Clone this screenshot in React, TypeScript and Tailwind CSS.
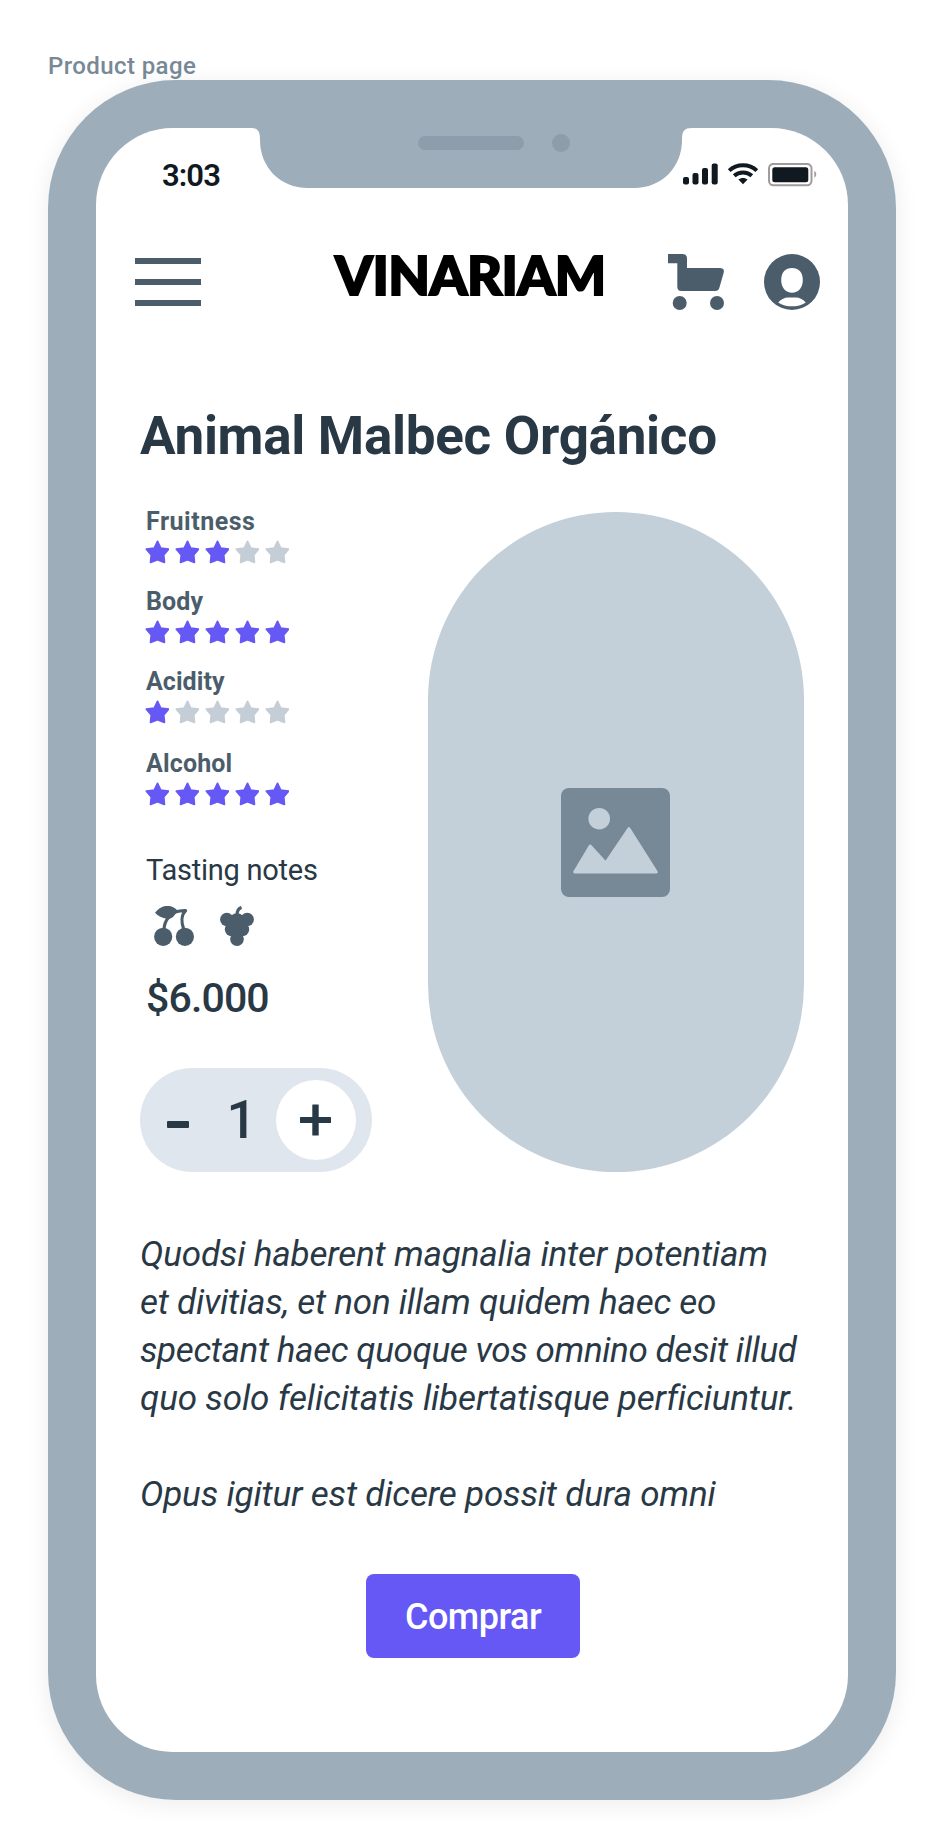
const STAR =
  "M12 1.4 L15.2 8.2 L23.1 9.2 L18.2 14.8 L18.9 22.4 L12 19.6 L5.1 22.4 L5.8 14.8 L0.9 9.2 L8.8 8.2 Z";

type Rating = { label: string; value: number; spacing: string; tracking: string };

const RATINGS: Rating[] = [
  { label: "Fruitness", value: 3, spacing: "-mt-[2px]", tracking: "tracking-[0.5px]" },
  { label: "Body", value: 5, spacing: "mt-[26px]", tracking: "tracking-[0.1px]" },
  { label: "Acidity", value: 1, spacing: "mt-[26px]", tracking: "tracking-[0.05px]" },
  { label: "Alcohol", value: 5, spacing: "mt-[28px]", tracking: "tracking-[0.15px]" },
];

const DESCRIPTION = [
  { text: "Quodsi haberent magnalia inter potentiam", tracking: "tracking-[-0.18px]" },
  { text: "et divitias, et non illam quidem haec eo", tracking: "tracking-[-0.24px]" },
  { text: "spectant haec quoque vos omnino desit illud", tracking: "tracking-[-0.40px]" },
  { text: "quo solo felicitatis libertatisque perficiuntur.", tracking: "tracking-[-0.15px]" },
  { text: "", tracking: "" },
  { text: "Opus igitur est dicere possit dura omni", tracking: "tracking-[-0.17px]" },
];

function Notch() {
  return (
    <svg className="absolute top-[-1px] left-[154px]" width="442" height="61" viewBox="0 0 442 61" aria-hidden="true">
      <path
        d="M0 0 H442 V1 C434 1 432 4 432 13 C432 40 412 61 384 61 H58 C30 61 10 40 10 13 C10 4 8 1 0 1 Z"
        fill="#9eadba"
      />
      <rect x="168" y="9" width="106" height="14" rx="7" fill="#8e9dab" />
      <circle cx="311" cy="16" r="9" fill="#8e9dab" />
    </svg>
  );
}

function StatusIcons() {
  return (
    <svg className="mt-1" width="138" height="24" viewBox="0 0 138 24" aria-hidden="true">
      <g fill="#101820">
        <rect x="4" y="14" width="6" height="7.5" rx="2" />
        <rect x="13.5" y="10" width="6" height="11.5" rx="2" />
        <rect x="23" y="5" width="6" height="16.5" rx="2" />
        <rect x="32.7" y="0.5" width="6" height="21" rx="2" />
      </g>
      <g fill="none" stroke="#101820" strokeWidth="4">
        <path d="M50.2 7.6 C57.6 0.6 70.4 0.6 77.8 7.6" />
        <path d="M55.2 12.8 C60 8.4 68 8.4 72.8 12.8" />
      </g>
      <path d="M59.4 16.6 C62 14.4 66 14.4 68.6 16.6 L64 21.2 Z" fill="#101820" />
      <rect x="90" y="0.9" width="42.5" height="21.4" rx="4.5" fill="none" stroke="#a09c9c" strokeWidth="2" />
      <rect x="93.3" y="4.2" width="36" height="15" rx="2.5" fill="#101820" />
      <path d="M135.3 7.8 C137.9 9.4 137.9 13.2 135.3 14.8 Z" fill="#a09c9c" />
    </svg>
  );
}

function CartIcon() {
  return (
    <svg width="56" height="56" viewBox="0 0 56 56" fill="#4b5d6b" aria-hidden="true">
      <path d="M0 0 H14.5 Q19 0 19 4.5 V14 H51.5 Q57 14 55.6 19 L51.3 34 Q50.4 37 47.3 37 H13.5 Q9.3 37 9.3 32.8 V9.3 H0 Z" />
      <circle cx="11.7" cy="49" r="7" />
      <circle cx="49" cy="49" r="7" />
    </svg>
  );
}

function UserIcon() {
  return (
    <svg width="56" height="56" viewBox="0 0 56 56" aria-hidden="true">
      <circle cx="28" cy="28" r="28" fill="#4b5d6b" />
      <path
        d="M28 14 C34.5 14 38.8 18.2 38.8 26 C38.8 33.5 34.5 38.8 28 38.8 C21.5 38.8 17.2 33.5 17.2 26 C17.2 18.2 21.5 14 28 14 Z"
        fill="#fff"
      />
      <path d="M14.2 48.4 C18 45 20.5 43.6 24 43.6 H32 C35.5 43.6 38 45 41.8 48.4 C34 53.6 22 53.6 14.2 48.4 Z" fill="#fff" />
    </svg>
  );
}

function Stars({ value }: { value: number }) {
  return (
    <div className="mt-[6px] flex gap-[6px]">
      {[1, 2, 3, 4, 5].map((n) => (
        <svg
          key={n}
          width="24"
          height="24"
          viewBox="-0.5 0 24 24"
          strokeWidth="1.8"
          strokeLinejoin="round"
          className={n <= value ? "fill-[#6558f5] stroke-[#6558f5]" : "fill-[#c5cdd7] stroke-[#c5cdd7]"}
          aria-hidden="true"
        >
          <path d={STAR} />
        </svg>
      ))}
    </div>
  );
}

function CherryIcon() {
  return (
    <svg width="40" height="40" viewBox="0 0 40 40" aria-hidden="true">
      <g fill="#4b5d6b">
        <circle cx="9.2" cy="30.8" r="9.1" />
        <circle cx="30.9" cy="30.8" r="9.1" />
        <path d="M1 6.8 C7 -1.5 17 -2.5 23.5 4.5 C20 11.5 17 13 13 12.8 C8 12.4 4 10 1 6.8 Z" />
      </g>
      <g fill="none" stroke="#4b5d6b" strokeWidth="3.2" strokeLinecap="round" strokeLinejoin="round">
        <path d="M21.5 6 C25.5 4.6 29 4.5 31.6 4.6 C27 9 27.5 17 29.6 23" />
        <path d="M14.8 11 C11.5 15 10.2 19 10 23" />
      </g>
    </svg>
  );
}

function GrapeIcon() {
  return (
    <svg width="34" height="40" viewBox="0 0 34 40" aria-hidden="true">
      <g fill="#4b5d6b">
        <circle cx="6.8" cy="13.4" r="6.7" />
        <circle cx="27.2" cy="13.4" r="6.7" />
        <circle cx="17" cy="15" r="7.8" />
        <circle cx="11.7" cy="23.3" r="6.9" />
        <circle cx="22.3" cy="23.3" r="6.9" />
        <circle cx="17" cy="33.2" r="6.8" />
        <rect x="9" y="12" width="16" height="17" />
      </g>
      <path d="M17 9 C17 5 18 2.6 21.5 1.4" fill="none" stroke="#4b5d6b" strokeWidth="3.2" />
    </svg>
  );
}

function PicturePlaceholder() {
  return (
    <div className="flex h-[660px] w-[376px] items-center justify-center rounded-[188px] bg-[#c3cfd9] pr-[1px]">
      <svg width="109" height="109" viewBox="0 0 109 109" aria-hidden="true">
        <rect width="109" height="109" rx="8" fill="#778896" />
        <circle cx="38.2" cy="30.7" r="10.8" fill="#c3cfd9" />
        <path
          d="M13.7 84 L29.2 58 L44.7 75 L68 40.7 L95.3 84 Z"
          fill="#c3cfd9"
          stroke="#c3cfd9"
          strokeWidth="3"
          strokeLinejoin="round"
        />
      </svg>
    </div>
  );
}

function QuantityStepper() {
  return (
    <div className="mt-[46px] flex h-[104px] w-[232px] items-center rounded-[52px] bg-[#dfe6ee]">
      <button type="button" aria-label="Remove one" className="flex h-[104px] w-[76px] items-center justify-center">
        <span className="mt-[9px] h-[7px] w-[22px] rounded-[1px] bg-[#293845]" />
      </button>
      <span className="w-[42px] pl-[9px] text-center text-[53px] leading-[104px] font-medium text-[#293845]">1</span>
      <button
        type="button"
        aria-label="Add one"
        className="ml-[18px] flex h-[80px] w-[80px] items-center justify-center rounded-full bg-white pr-px"
      >
        <svg width="31" height="32" viewBox="0 0 31 32" fill="#293845" aria-hidden="true">
          <rect x="0" y="13" width="31" height="6" rx="0.5" />
          <rect x="12.3" y="0.5" width="6.4" height="31" rx="0.5" />
        </svg>
      </button>
    </div>
  );
}

export default function App() {
  return (
    <div className="flex h-[1848px] w-[944px] flex-col overflow-hidden bg-white font-['Roboto',sans-serif]">
      <div className="h-[80px] shrink-0 pt-[50px] pl-[48px]">
        <p className="relative z-10 text-[24px] leading-[32px] font-medium tracking-[0.4px] text-[#778896]">
          Product page
        </p>
      </div>

      <div className="ml-[48px] h-[1720px] w-[848px] shrink-0 rounded-[128px] bg-[#9eadba] p-[48px] shadow-[0_4px_24px_rgba(0,0,0,0.08)]">
        <div className="relative flex h-[1624px] w-[752px] flex-col rounded-[77px] bg-white">
          <Notch />

          <div className="flex h-[126px] items-start justify-between pt-[31px] pr-[31px] pl-[66px]">
            <span className="mt-[1px] text-[31px] leading-[32px] font-semibold tracking-[-0.9px] text-[#101820]">3:03</span>
            <StatusIcons />
          </div>

          <header className="flex h-[56px] items-start pl-[39px]">
            <button type="button" aria-label="Menu" className="mt-[4px] flex w-[66px] flex-col gap-[15px]">
              <span className="h-[6px] bg-[#4b5d6b]" />
              <span className="h-[6px] bg-[#4b5d6b]" />
              <span className="h-[6px] bg-[#4b5d6b]" />
            </button>
            <h1 className="mt-px ml-[133px] w-[270px] pl-[1px] font-['Lato',sans-serif] text-[54px] leading-[40px] font-black tracking-[-0.5px] whitespace-nowrap text-black [-webkit-text-stroke:2px_black]">
              VINARIAM
            </h1>
            <div className="ml-[64px] flex gap-[40px]">
              <CartIcon />
              <UserIcon />
            </div>
          </header>

          <main className="flex flex-col px-[44px]">
            <h2 className="mt-[98px] text-[53px] leading-[56px] font-bold tracking-[-0.3px] whitespace-nowrap text-[#293845]">
              Animal Malbec Orgánico
            </h2>

            <div className="mt-[48px] flex">
              <section className="flex w-[288px] flex-col">
                <div className="flex flex-col pl-[5px]">
                  {RATINGS.map((r) => (
                    <div key={r.label} className={r.spacing}>
                      <p className={`pl-px text-[25px] leading-[24px] font-bold text-[#4b5d6b] ${r.tracking}`}>{r.label}</p>
                      <Stars value={r.value} />
                    </div>
                  ))}
                  <p className="mt-[48px] pl-px text-[29px] leading-[32px] tracking-[-0.25px] text-[#293845]">
                    Tasting notes
                  </p>
                  <div className="mt-[20px] flex h-[40px] gap-[26px] pl-[9px]">
                    <CherryIcon />
                    <GrapeIcon />
                  </div>
                  <p className="mt-[28px] pl-px text-[41px] leading-[48px] font-medium tracking-[-0.85px] text-[#293845]">
                    $6.000
                  </p>
                </div>
                <QuantityStepper />
              </section>
              <PicturePlaceholder />
            </div>

            <div className="mt-[59px] text-[35px] leading-[48px] whitespace-nowrap text-[#293845] italic">
              {DESCRIPTION.map((line, i) => (
                <p key={i} className={`h-[48px] ${line.tracking}`}>
                  {line.text}
                </p>
              ))}
            </div>

            <button
              type="button"
              className="mt-[55px] ml-[226px] h-[84px] w-[214px] rounded-[8px] bg-[#6558f5] pt-[2px] text-[36px] leading-[40px] font-medium tracking-[-0.5px] text-white"
            >
              Comprar
            </button>
          </main>
        </div>
      </div>
    </div>
  );
}
